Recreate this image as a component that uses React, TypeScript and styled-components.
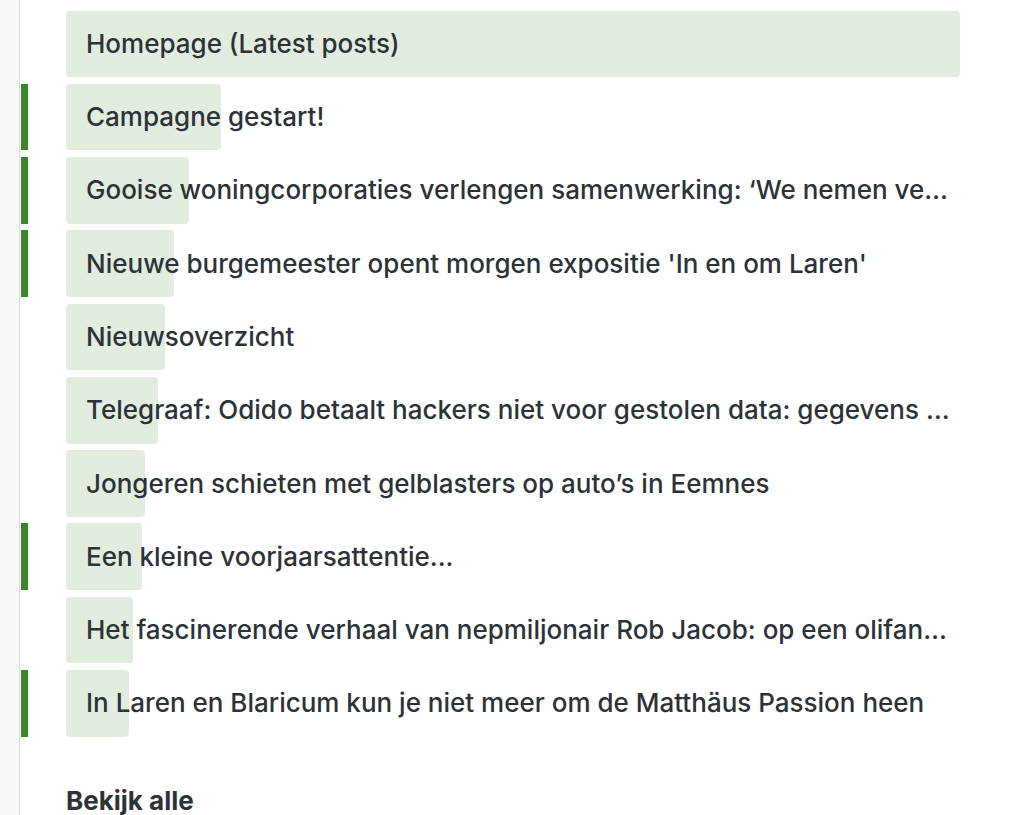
import React from "react";
import styled, { createGlobalStyle } from "styled-components";

const posts = [
  { title: "Homepage (Latest posts)", fill: 894, marked: false },
  { title: "Campagne gestart!", fill: 155, marked: true },
  { title: "Gooise woningcorporaties verlengen samenwerking: ‘We nemen verantwoordelijkheid’", fill: 123, marked: true },
  { title: "Nieuwe burgemeester opent morgen expositie 'In en om Laren'", fill: 108, marked: true },
  { title: "Nieuwsoverzicht", fill: 99, marked: false },
  { title: "Telegraaf: Odido betaalt hackers niet voor gestolen data: gegevens op straat", fill: 92, marked: false },
  { title: "Jongeren schieten met gelblasters op auto’s in Eemnes", fill: 79, marked: false },
  { title: "Een kleine voorjaarsattentie...", fill: 76, marked: true },
  { title: "Het fascinerende verhaal van nepmiljonair Rob Jacob: op een olifant door Laren", fill: 67, marked: false },
  { title: "In Laren en Blaricum kun je niet meer om de Matthäus Passion heen", fill: 63, marked: true },
];

const GlobalStyle = createGlobalStyle`
  body {
    margin: 0;
    background: #ffffff;
    font-family: Inter, "Helvetica Neue", Arial, sans-serif;
    color: #2c3338;
  }
`;

export default function App() {
  return (
    <>
      <GlobalStyle />
      <Page>
        <Gutter />
        <Main>
          <List>
            {posts.map((post) => (
              <Row key={post.title}>
                <Marker $active={post.marked} />
                <Item>
                  <Fill style={{ width: post.fill }} />
                  <Title>{post.title}</Title>
                </Item>
              </Row>
            ))}
          </List>
          <ViewAll>Bekijk alle</ViewAll>
        </Main>
      </Page>
    </>
  );
}

const Page = styled.div`
  display: flex;
  height: 815px;
  overflow: hidden;
`;

const Gutter = styled.div`
  width: 19px;
  flex-shrink: 0;
  background: #f6f7f7;
  border-right: 1px solid #dcdcde;
`;

const Main = styled.div`
  flex: 1;
  padding: 10.5px 0 0 1px;
`;

const List = styled.div`
  display: flex;
  flex-direction: column;
  gap: 6.6px;
`;

const Row = styled.div`
  display: flex;
  height: 66.7px;
`;

const Marker = styled.div<{ $active: boolean }>`
  width: 7px;
  flex-shrink: 0;
  background: ${(p) => (p.$active ? "#3b862b" : "transparent")};
`;

const Item = styled.div`
  position: relative;
  margin-left: 38px;
  width: 894px;
  display: flex;
  align-items: center;
  padding: 0 5px 0 20px;
  box-sizing: border-box;
`;

const Fill = styled.div`
  position: absolute;
  top: 0;
  bottom: 0;
  left: 0;
  background: #e2ecdf;
  border-radius: 4px;
`;

const Title = styled.span`
  position: relative;
  font-size: 26px;
  font-weight: 500;
  line-height: 32px;
  white-space: nowrap;
  overflow: hidden;
  text-overflow: ellipsis;
`;

const ViewAll = styled.div`
  margin: 48px 0 0 45px;
  font-size: 26px;
  font-weight: 700;
  line-height: 32px;
`;
